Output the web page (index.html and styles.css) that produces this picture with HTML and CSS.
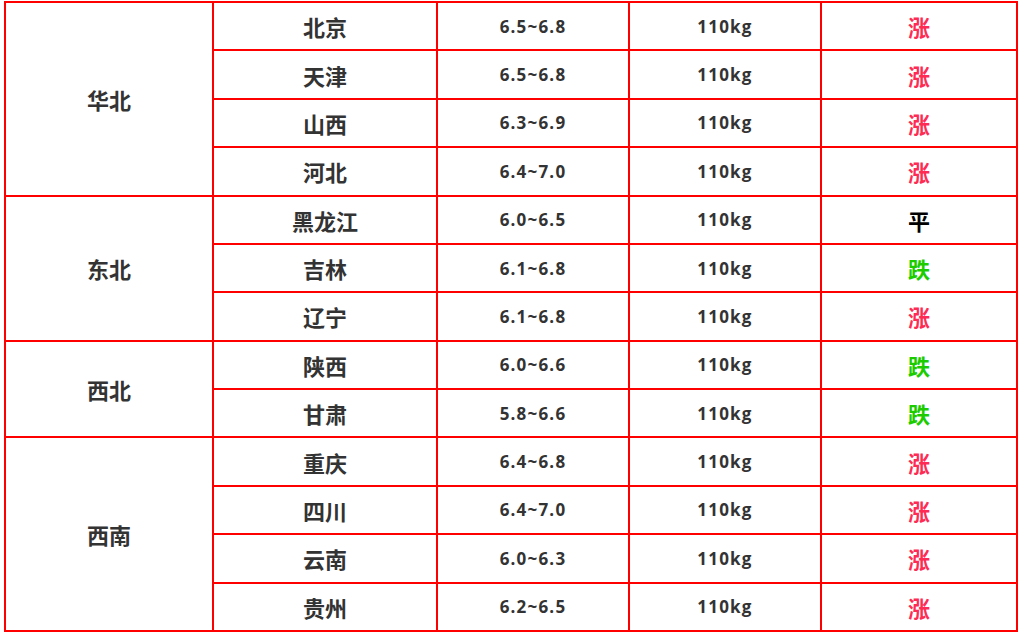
FILE: index.html
```html
<!DOCTYPE html>
<html lang="zh-CN">
<head>
<meta charset="utf-8">
<link rel="stylesheet" href="styles.css">
</head>
<body>
<table class="price-table">
  <colgroup>
    <col class="c-region"><col class="c-prov"><col class="c-price"><col class="c-weight"><col class="c-trend">
  </colgroup>
  <tbody>
    <tr><td class="region" rowspan="4">华北</td><td class="prov">北京</td><td class="num">6.5~6.8</td><td class="num">110kg</td><td class="trend up">涨</td></tr>
    <tr><td class="prov">天津</td><td class="num">6.5~6.8</td><td class="num">110kg</td><td class="trend up">涨</td></tr>
    <tr><td class="prov">山西</td><td class="num">6.3~6.9</td><td class="num">110kg</td><td class="trend up">涨</td></tr>
    <tr><td class="prov">河北</td><td class="num">6.4~7.0</td><td class="num">110kg</td><td class="trend up">涨</td></tr>
    <tr><td class="region" rowspan="3">东北</td><td class="prov">黑龙江</td><td class="num">6.0~6.5</td><td class="num">110kg</td><td class="trend flat">平</td></tr>
    <tr><td class="prov">吉林</td><td class="num">6.1~6.8</td><td class="num">110kg</td><td class="trend down">跌</td></tr>
    <tr><td class="prov">辽宁</td><td class="num">6.1~6.8</td><td class="num">110kg</td><td class="trend up">涨</td></tr>
    <tr><td class="region" rowspan="2">西北</td><td class="prov">陕西</td><td class="num">6.0~6.6</td><td class="num">110kg</td><td class="trend down">跌</td></tr>
    <tr><td class="prov">甘肃</td><td class="num">5.8~6.6</td><td class="num">110kg</td><td class="trend down">跌</td></tr>
    <tr><td class="region" rowspan="4">西南</td><td class="prov">重庆</td><td class="num">6.4~6.8</td><td class="num">110kg</td><td class="trend up">涨</td></tr>
    <tr><td class="prov">四川</td><td class="num">6.4~7.0</td><td class="num">110kg</td><td class="trend up">涨</td></tr>
    <tr><td class="prov">云南</td><td class="num">6.0~6.3</td><td class="num">110kg</td><td class="trend up">涨</td></tr>
    <tr><td class="prov">贵州</td><td class="num">6.2~6.5</td><td class="num">110kg</td><td class="trend up">涨</td></tr>
  </tbody>
</table>
</body>
</html>
```
FILE: styles.css
```css
html, body {
  margin: 0;
  padding: 0;
  background: #fff;
}
body {
  padding: 1px 0 0 4px;
}
.price-table {
  border-collapse: collapse;
  width: 1014px;
  height: 631px;
  table-layout: fixed;
  font-family: "Noto Sans CJK SC", "Open Sans", sans-serif;
  color: #333;
  font-weight: bold;
}
.c-region { width: 208px; }
.c-prov { width: 224px; }
.c-price { width: 192px; }
.c-weight { width: 192px; }
.c-trend { width: 196px; }
.price-table td {
  border: 2px solid #ff0000;
  text-align: center;
  vertical-align: middle;
  padding: 0;
  height: 46px;
  font-size: 22px;
  line-height: 1;
}
.price-table td.num {
  font-family: "Open Sans", sans-serif;
  font-size: 17px;
  font-weight: 700;
  letter-spacing: 1.2px;
}
.trend.up { color: #fe2c55; }
.trend.down { color: #1ccc00; }
.trend.flat { color: #000; }
```
